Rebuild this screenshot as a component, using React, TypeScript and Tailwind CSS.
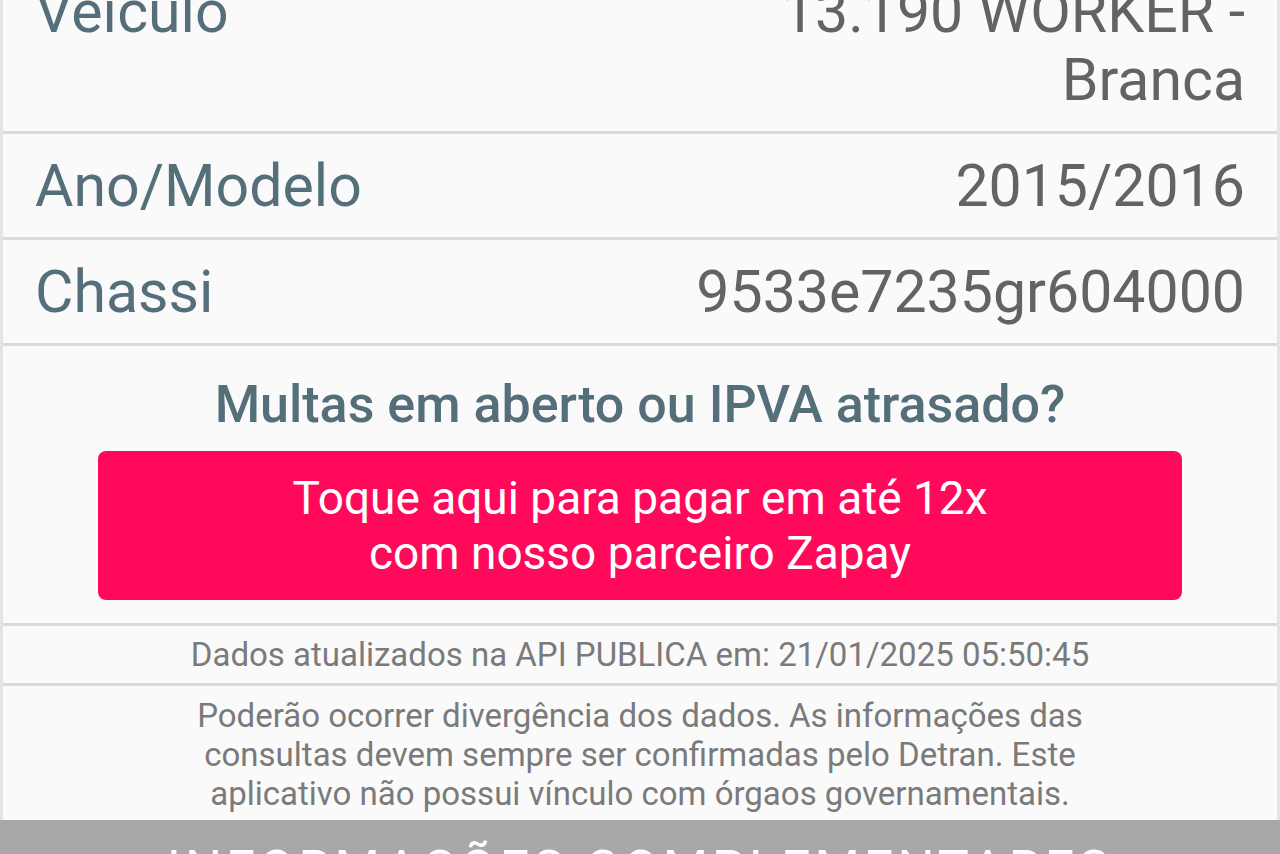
import React from 'react'

const rows = [
  { label: 'Veículo', value: ['13.190 WORKER -', 'Branca'] },
  { label: 'Ano/Modelo', value: ['2015/2016'] },
  { label: 'Chassi', value: ['9533e7235gr604000'] },
]

export default function App() {
  return (
    <div
      className="h-[854px] w-[1280px] overflow-hidden bg-[#fafafa]"
      style={{ fontFamily: 'Roboto, "Noto Sans", sans-serif' }}
    >
      <div className="-mt-[40px] border-x-[3px] border-[#e4e4e4]">
        {/* Vehicle data rows */}
        {rows.map((row) => (
          <div
            key={row.label}
            className="flex items-start justify-between border-b-[3px] border-[#dadada] px-[32px] pt-[18px] pb-[17px] text-[59px] leading-[68px]"
          >
            <span className="text-[#546e7a]">{row.label}</span>
            <span className="text-right text-[#636363]">
              {row.value.map((line) => (
                <span key={line} className="block">
                  {line}
                </span>
              ))}
            </span>
          </div>
        ))}

        {/* Zapay call to action */}
        <div className="border-b-[3px] border-[#dadada] pt-[29px] pb-[23px]">
          <h2 className="text-center text-[52px] leading-[60px] font-medium text-[#546e7a]">
            Multas em aberto ou IPVA atrasado?
          </h2>
          <button className="mx-auto mt-[16px] flex h-[149px] w-[1084px] flex-col items-center justify-center rounded-[8px] bg-[#ff0a5b] text-[46px] leading-[55px] text-white">
            <span>Toque aqui para pagar em até 12x</span>
            <span>com nosso parceiro Zapay</span>
          </button>
        </div>

        <p className="border-b-[3px] border-[#dadada] py-[10px] text-center text-[33px] leading-[37px] text-[#7a7a7a]">
          Dados atualizados na API PUBLICA em: 21/01/2025 05:50:45
        </p>

        <p className="pt-[10px] pb-[7px] text-center text-[33px] leading-[39px] text-[#7a7a7a]">
          Poderão ocorrer divergência dos dados. As informações das
          <br />
          consultas devem sempre ser confirmadas pelo Detran. Este
          <br />
          aplicativo não possui vínculo com órgaos governamentais.
        </p>
      </div>

      <div className="bg-[#a8a8a8] pt-[11px] text-center text-[52px] tracking-[4px] text-white">
        INFORMAÇÕES COMPLEMENTARES
      </div>
    </div>
  )
}
